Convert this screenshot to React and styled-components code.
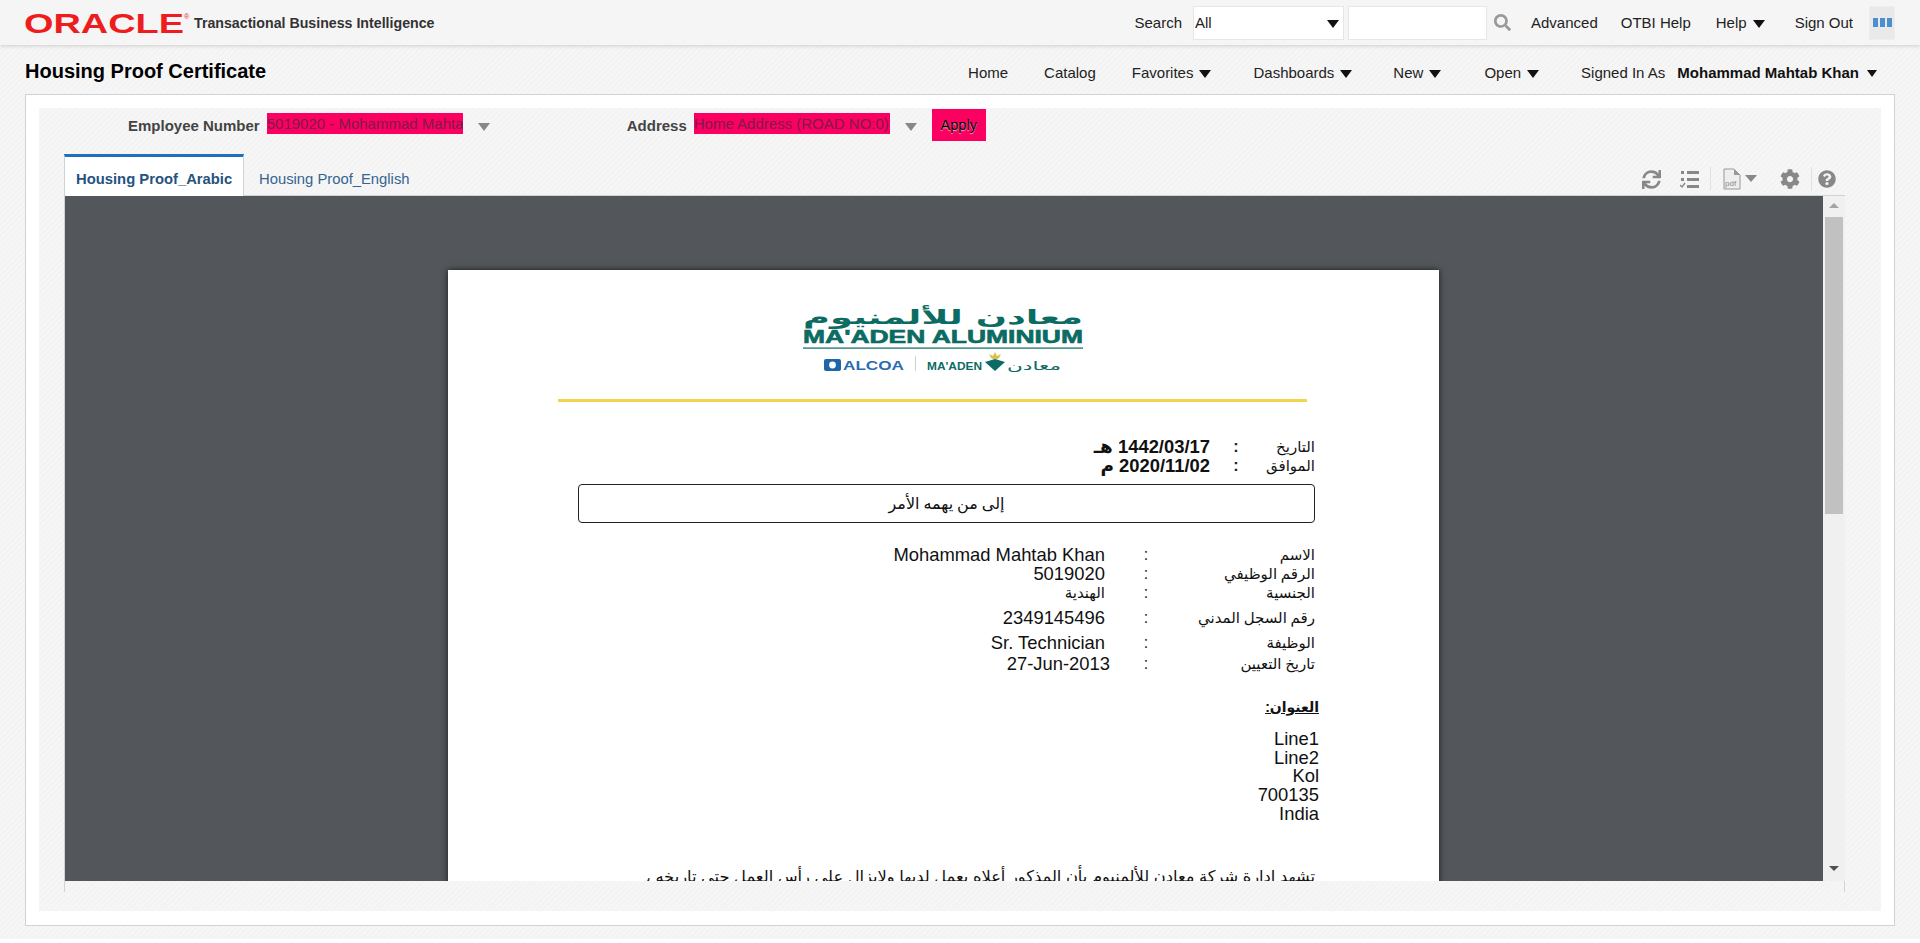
import React from "react";
import styled, { createGlobalStyle } from "styled-components";
import { FaCog, FaQuestionCircle, FaSearch, FaSync } from "react-icons/fa";

const Global = createGlobalStyle`
  html, body { margin: 0; padding: 0; background: #fff; overflow: hidden; }
  body { font-family: "Liberation Sans", Arial, "DejaVu Sans", sans-serif; }
  * { box-sizing: border-box; }
`;
const Page = styled.div`
  height: 939px;
  width: 1920px;
  display: flex;
  flex-direction: column;
  background: repeating-linear-gradient(135deg, #f6f6f6 0 2px, #f3f3f3 2px 4px);
`;
const Header = styled.header`
  height: 45px;
  flex: none;
  display: flex;
  align-items: center;
  padding: 0 25px 0 24px;
  background: #f5f5f5;
  box-shadow: 0 1px 4px rgba(0, 0, 0, 0.16);
  font-size: 15px;
  color: #222;
`;
const Brand = styled.div`
  display: flex;
  align-items: center;
  gap: 2px;
  margin-right: auto;
`;
const Product = styled.span`
  font-size: 14.2px;
  font-weight: bold;
  color: #333;
`;
const GlobalLink = styled.span`
  margin-left: ${(p) => p.$gap || 0}px;
  white-space: nowrap;
  display: inline-flex;
  align-items: center;
`;
const Caret = styled.i`
  display: inline-block;
  width: 0;
  height: 0;
  margin-top: 3px;
  margin-left: ${(p) => p.$gap ?? 6}px;
  border-left: ${(p) => p.$size || 6}px solid transparent;
  border-right: ${(p) => p.$size || 6}px solid transparent;
  border-top: ${(p) => (p.$size || 6) + 2}px solid ${(p) => p.$color || "#111"};
`;
const SearchSelect = styled.div`
  width: 151px;
  height: 34px;
  margin-left: 11px;
  padding: 0 4px 0 1px;
  display: flex;
  align-items: center;
  justify-content: space-between;
  background: #fff;
  border: 1px solid #e6e6e6;
`;
const SearchInput = styled.div`
  width: 139px;
  height: 34px;
  margin-left: 4px;
  background: #fff;
  border: 1px solid #e6e6e6;
`;
const SearchIcon = styled(FaSearch)`
  margin-left: 7px;
  width: 17px;
  height: 17px;
  color: #999;
`;
const LayoutBtn = styled.div`
  width: 26px;
  height: 34px;
  margin-left: 16px;
  display: flex;
  align-items: center;
  justify-content: center;
  gap: 2px;
  background: #e9e9e9;
  border: 1px solid #eee;
`;
const LayoutBar = styled.i`
  width: 5px;
  height: 9px;
  background: #4a90d0;
`;
const TitleRow = styled.div`
  height: 49px;
  flex: none;
  display: flex;
  align-items: center;
  padding: 3px 43px 0 25px;
`;
const Title = styled.h1`
  margin: 0 auto 0 0;
  font-size: 20px;
  font-weight: bold;
  color: #000;
`;
const Nav = styled.nav`
  display: flex;
  align-items: center;
  margin-top: 2px;
  font-size: 15px;
  color: #222;
`;
const NavItem = styled.span`
  display: inline-flex;
  align-items: center;
  white-space: nowrap;
  margin-left: ${(p) => p.$gap || 0}px;
`;
const UserName = styled.strong`
  margin-left: 12px;
  color: #111;
`;
const Panel = styled.main`
  width: 1870px;
  height: 832px;
  margin-left: 25px;
  padding: 13px;
  background: #fff;
  border: 1px solid #cfd3d8;
`;
const Inner = styled.section`
  height: 803px;
  background: repeating-linear-gradient(135deg, #f6f6f6 0 2px, #f3f3f3 2px 4px);
  padding-top: 1px;
  display: flex;
  flex-direction: column;
`;
const FilterBar = styled.div`
  height: 32px;
  flex: none;
  display: flex;
  align-items: center;
  padding-left: 89px;
`;
const FilterLabel = styled.label`
  font-size: 15px;
  font-weight: bold;
  color: #444;
  margin-left: ${(p) => p.$gap || 0}px;
  white-space: nowrap;
`;
const PinkField = styled.div`
  width: ${(p) => p.$w}px;
  height: 21px;
  margin: 0 0 3px 7px;
  background: #fb0060;
  color: #7d1b4b;
  font-size: 15px;
  line-height: 21px;
  overflow: hidden;
  white-space: nowrap;
`;
const ApplyBtn = styled.button`
  width: 54px;
  height: 32px;
  margin-left: 15px;
  border: 0;
  padding: 0;
  background: #fb0060;
  color: #000;
  font: 14.5px "Liberation Sans", Arial, sans-serif;
  text-shadow: 0 1px 1px rgba(255, 255, 255, 0.7);
`;
const TabRow = styled.div`
  height: 42px;
  flex: none;
  margin: 13px 36px 0 25px;
  display: flex;
  align-items: flex-end;
  border-bottom: 1px solid #cfd3d8;
`;
const Tab = styled.div`
  width: ${(p) => (p.$active ? "180px" : "auto")};
  height: ${(p) => (p.$active ? "42px" : "39px")};
  margin-bottom: -1px;
  padding: ${(p) => (p.$active ? "5px 0 0 11px" : "5px 0 0 15px")};
  display: flex;
  align-items: center;
  font-size: 14.8px;
  font-weight: ${(p) => (p.$active ? "bold" : "normal")};
  color: ${(p) => (p.$active ? "#25527f" : "#336591")};
  background: ${(p) => (p.$active ? "#fff" : "transparent")};
  border-top: ${(p) => (p.$active ? "3px solid #1b71bc" : "0")};
  border-left: ${(p) => (p.$active ? "1px solid #cfd3d8" : "0")};
  border-right: ${(p) => (p.$active ? "1px solid #cfd3d8" : "0")};
  white-space: nowrap;
`;
const Toolbar = styled.div`
  margin: 0 9px 4px auto;
  display: flex;
  align-items: center;
  color: #888;
`;
const ToolSep = styled.i`
  width: 1px;
  height: 24px;
  background: #dfe1e4;
  margin: 0 ${(p) => p.$r}px 0 ${(p) => p.$l}px;
`;
const RefreshIcon = styled(FaSync)`
  width: 19px;
  height: 19px;
`;
const GearIcon = styled(FaCog)`
  width: 20px;
  height: 20px;
  margin-left: 22px;
`;
const HelpIcon = styled(FaQuestionCircle)`
  width: 18px;
  height: 18px;
`;
const ListSvg = styled.svg`
  width: 19px;
  height: 19px;
  margin-left: 19px;
`;
const PdfSvg = styled.svg`
  width: 35px;
  height: 22px;
`;
const Frame = styled.div`
  height: 696px;
  margin: 0 36px 0 25px;
  display: flex;
  align-items: flex-start;
  border-left: 1px solid #cfd3d8;
  border-right: 1px solid #cfd3d8;
`;
const Viewer = styled.div`
  width: 1758px;
  height: 685px;
  flex: none;
  padding: 74px 0 0 383px;
  background: #53565a;
  overflow: hidden;
`;
const Scrollbar = styled.div`
  width: 22px;
  height: 685px;
  flex: none;
  display: flex;
  flex-direction: column;
  align-items: center;
  background: #f0f0f0;
  padding: 7px 1px;
`;
const ScrollUp = styled.i`
  width: 0;
  height: 0;
  border-left: 5px solid transparent;
  border-right: 5px solid transparent;
  border-bottom: 5px solid #a3a3a3;
`;
const ScrollThumb = styled.div`
  width: 18px;
  height: 297px;
  margin-top: 9px;
  background: #c1c1c1;
`;
const ScrollDown = styled.i`
  width: 0;
  height: 0;
  margin-top: auto;
  margin-bottom: 3px;
  border-left: 5px solid transparent;
  border-right: 5px solid transparent;
  border-top: 5px solid #505050;
`;
const Sheet = styled.article`
  width: 991px;
  height: 1280px;
  padding: 32px 124px 0 130px;
  background: #fff;
  color: #111;
  box-shadow: 0 0 6px rgba(0, 0, 0, 0.7);
`;
const LogoSvg = styled.svg`
  display: block;
  width: 282px;
  height: 70px;
  margin-left: 224px;
`;
const YellowRule = styled.div`
  width: 749px;
  height: 3px;
  margin: 27px 0 0 -20px;
  background: #f2d44e;
`;
const DateRows = styled.div`
  margin-top: 34px;
`;
const DateRow = styled.div`
  direction: rtl;
  display: grid;
  grid-template-columns: 74px 10px 1fr;
  height: 19px;
  align-items: center;
`;
const ArLabel = styled.span`
  font-family: "Liberation Serif", "DejaVu Sans", serif;
  font-size: 15px;
  white-space: nowrap;
`;
const Colon = styled.span`
  font-weight: ${(p) => (p.$bold ? "bold" : "normal")};
  font-size: 16px;
  color: #222;
  text-align: center;
`;
const DateValue = styled.span`
  font-size: 18.4px;
  font-weight: bold;
  padding-right: 21px;
`;
const Box = styled.div`
  height: 39px;
  margin-top: 10px;
  display: flex;
  align-items: center;
  justify-content: center;
  font-family: "Liberation Serif", "DejaVu Sans", serif;
  font-size: 16px;
  border: 1px solid #222;
  border-radius: 4px;
`;
const InfoRows = styled.div`
  margin-top: 21px;
`;
const InfoRow = styled.div`
  direction: rtl;
  display: grid;
  grid-template-columns: 165px 8px 1fr;
  height: ${(p) => p.$h}px;
  align-items: center;
`;
const InfoValue = styled.span`
  font-size: ${(p) => (p.$ar ? 15 : 18.4)}px;
  padding-right: ${(p) => p.$pad ?? 37}px;
  unicode-bidi: plaintext;
  text-align: right;
  white-space: nowrap;
`;
const AddressHead = styled.div`
  direction: rtl;
  margin: 24px -4px 0 0;
  font-size: 14px;
  font-weight: bold;
  text-decoration: underline;
`;
const AddressLines = styled.div`
  margin: 15px -4px 0 0;
  font-size: 18.4px;
  line-height: 18.7px;
  text-align: right;
`;
const Paragraph = styled.p`
  direction: rtl;
  margin: 43px 0 0;
  font-size: 16.3px;
  line-height: 19px;
  white-space: nowrap;
`;

const OracleLogo = () => (
  <svg width="168" height="24" viewBox="0 0 168 24" aria-label="Oracle">
    <text x="0" y="22" fontFamily="Liberation Sans" fontSize="28" fontWeight="bold" fill="#ee1c1c"
      textLength="160" lengthAdjust="spacingAndGlyphs">ORACLE</text>
    <text x="160" y="8" fontFamily="Liberation Sans" fontSize="7" fill="#ee1c1c">®</text>
  </svg>
);

const MaadenLogo = () => (
  <LogoSvg viewBox="0 0 282 70" aria-label="Ma'aden Aluminium">
    <text x="1" y="22" fontFamily="DejaVu Sans" fontSize="20" fontWeight="bold" fill="#0c6b62"
      textLength="280" lengthAdjust="spacingAndGlyphs" direction="rtl" textAnchor="end">معادن للألمنيوم</text>
    <text x="1" y="41" fontFamily="Liberation Sans" fontSize="17.5" fontWeight="bold" fill="#0c6b62"
      stroke="#0c6b62" strokeWidth="0.6" textLength="280" lengthAdjust="spacingAndGlyphs">MA'ADEN ALUMINIUM</text>
    <rect x="1" y="45.5" width="280" height="1.2" fill="#0c6b62" />
    <rect x="22" y="57" width="17" height="12" rx="2" fill="#1f66a8" />
    <circle cx="30.5" cy="63" r="3.4" fill="#fff" />
    <text x="41" y="68" fontFamily="Liberation Sans" fontSize="12.5" fontWeight="bold" fill="#2a6cb0"
      textLength="61" lengthAdjust="spacingAndGlyphs">ALCOA</text>
    <rect x="113" y="54" width="1" height="15" fill="#cfcfcf" />
    <text x="125" y="68" fontFamily="Liberation Sans" fontSize="11" fontWeight="bold" fill="#0c6b62"
      textLength="55" lengthAdjust="spacingAndGlyphs">MA'ADEN</text>
    <polygon points="193,50 195,54 199,52 197,56 193,58 189,56 187,52 191,54" fill="#d9c04a" />
    <polygon points="183,60 193,57 203,60 193,69" fill="#0c6b62" />
    <text x="205" y="68" fontFamily="DejaVu Sans" fontSize="12" fill="#0c6b62"
      textLength="54" lengthAdjust="spacingAndGlyphs" direction="rtl" textAnchor="end">معادن</text>
  </LogoSvg>
);

const infoRows = [
  { h: 19, label: "الاسم", value: "Mohammad Mahtab Khan" },
  { h: 19, label: "الرقم الوظيفي", value: "5019020" },
  { h: 21, label: "الجنسية", value: "الهندية", ar: true },
  { h: 29, label: "رقم السجل المدني", value: "2349145496" },
  { h: 20, label: "الوظيفة", value: "Sr. Technician" },
  { h: 23, label: "تاريخ التعيين", value: "27-Jun-2013", pad: 32 },
];

export default function App() {
  return (
    <Page>
      <Global />
      <Header>
        <Brand>
          <OracleLogo />
          <Product>Transactional Business Intelligence</Product>
        </Brand>
        <GlobalLink>Search</GlobalLink>
        <SearchSelect>All<Caret $gap={0} /></SearchSelect>
        <SearchInput />
        <SearchIcon />
        <GlobalLink $gap={20}>Advanced</GlobalLink>
        <GlobalLink $gap={23}>OTBI Help</GlobalLink>
        <GlobalLink $gap={25}>Help<Caret /></GlobalLink>
        <GlobalLink $gap={30}>Sign Out</GlobalLink>
        <LayoutBtn><LayoutBar /><LayoutBar /><LayoutBar /></LayoutBtn>
      </Header>
      <TitleRow>
        <Title>Housing Proof Certificate</Title>
        <Nav>
          <NavItem>Home</NavItem>
          <NavItem $gap={36}>Catalog</NavItem>
          <NavItem $gap={36}>Favorites<Caret /></NavItem>
          <NavItem $gap={42}>Dashboards<Caret /></NavItem>
          <NavItem $gap={41}>New<Caret /></NavItem>
          <NavItem $gap={43}>Open<Caret /></NavItem>
          <NavItem $gap={42}>Signed In As</NavItem>
          <NavItem><UserName>Mohammad Mahtab Khan</UserName><Caret $size={5} $gap={8} /></NavItem>
        </Nav>
      </TitleRow>
      <Panel>
        <Inner>
          <FilterBar>
            <FilterLabel>Employee Number</FilterLabel>
            <PinkField $w={196}>5019020 - Mohammad Mahtab Khan</PinkField>
            <Caret $gap={15} $color="#888" />
            <FilterLabel $gap={137}>Address</FilterLabel>
            <PinkField $w={196}>Home Address (ROAD NO:0)</PinkField>
            <Caret $gap={15} $color="#888" />
            <ApplyBtn>Apply</ApplyBtn>
          </FilterBar>
          <TabRow>
            <Tab $active>Housing Proof_Arabic</Tab>
            <Tab>Housing Proof_English</Tab>
            <Toolbar>
              <RefreshIcon />
              <ListSvg viewBox="0 0 19 19" fill="#888">
                <rect x="7" y="1" width="12" height="3" />
                <rect x="7" y="8" width="12" height="3" />
                <rect x="7" y="15" width="12" height="3" />
                <rect x="1" y="1" width="3" height="3" />
                <rect x="1" y="8" width="3" height="3" />
                <path d="M0 15l2 2 3-4" fill="none" stroke="#888" strokeWidth="1.4" />
              </ListSvg>
              <ToolSep $l={11} $r={12} />
              <PdfSvg viewBox="0 0 35 22">
                <path d="M1 1h10l6 6v14H1z" fill="#eee" stroke="#999" />
                <path d="M11 1v6h6" fill="#999" />
                <text x="2" y="18" fontSize="8" fontFamily="Liberation Sans" fill="#888">pdf</text>
                <path d="M22 7h12l-6 7z" fill="#888" />
              </PdfSvg>
              <GearIcon />
              <ToolSep $l={11} $r={6} />
              <HelpIcon />
            </Toolbar>
          </TabRow>
          <Frame>
            <Viewer>
              <Sheet>
                <MaadenLogo />
                <YellowRule />
                <DateRows>
                  <DateRow>
                    <ArLabel>التاريخ</ArLabel>
                    <Colon $bold>:</Colon>
                    <DateValue>1442/03/17 هـ</DateValue>
                  </DateRow>
                  <DateRow>
                    <ArLabel>الموافق</ArLabel>
                    <Colon $bold>:</Colon>
                    <DateValue>2020/11/02 م</DateValue>
                  </DateRow>
                </DateRows>
                <Box>إلى من يهمه الأمر</Box>
                <InfoRows>
                  {infoRows.map((r) => (
                    <InfoRow key={r.label} $h={r.h}>
                      <ArLabel>{r.label}</ArLabel>
                      <Colon>:</Colon>
                      <InfoValue $ar={r.ar} $pad={r.pad}>{r.value}</InfoValue>
                    </InfoRow>
                  ))}
                </InfoRows>
                <AddressHead>العنوان:</AddressHead>
                <AddressLines>
                  Line1<br />Line2<br />Kol<br />700135<br />India
                </AddressLines>
                <Paragraph>تشهد ادارة شركة معادن للألمنيوم بأن المذكور أعلاه يعمل لديها ولايزال على رأس العمل حتى تاريخه ،</Paragraph>
              </Sheet>
            </Viewer>
            <Scrollbar>
              <ScrollUp />
              <ScrollThumb />
              <ScrollDown />
            </Scrollbar>
          </Frame>
        </Inner>
      </Panel>
    </Page>
  );
}
